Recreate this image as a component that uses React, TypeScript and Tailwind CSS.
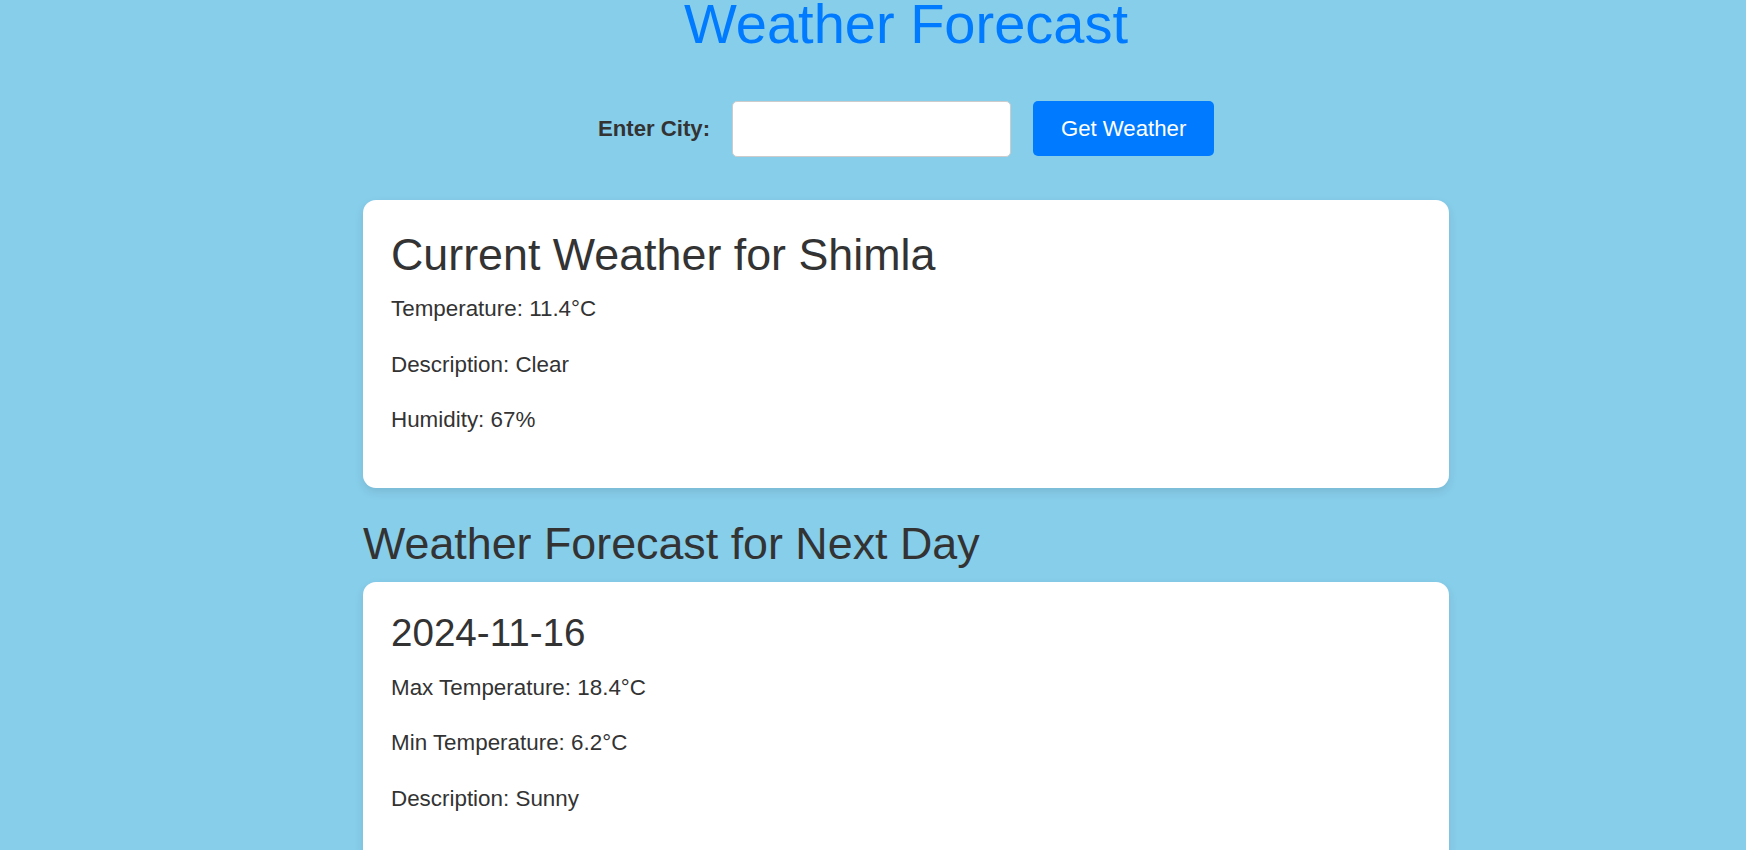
import { useState } from 'react';

const current = {
  city: 'Shimla',
  temp: 11.4,
  description: 'Clear',
  humidity: 67,
};

const forecast = {
  date: '2024-11-16',
  max: 18.4,
  min: 6.2,
  description: 'Sunny',
};

export default function App() {
  const [city, setCity] = useState('');

  return (
    <div className="min-h-screen bg-[#87ceeb] pl-[66px] text-[#333] font-['Liberation_Sans',Arial,sans-serif]">
      <div className="mx-auto w-[1086px] pb-10">
        {/* Title */}
        <h1 className="text-center text-[56px] leading-[48px] text-[#007bff]">Weather Forecast</h1>

        {/* Search row */}
        <div className="mt-[52.5px] flex items-center justify-center">
          <label className="text-[22.2px] leading-[25px] font-bold">Enter City:</label>
          <input
            type="text"
            value={city}
            onChange={(e) => setCity(e.target.value)}
            className="ml-[22px] h-[56px] w-[279px] rounded-[5px] border border-[#ccc] bg-white px-3 text-[22px] outline-none"
          />
          <button className="ml-[22px] h-[55px] w-[181px] rounded-[5px] bg-[#007bff] text-[22.2px] leading-[25px] text-white">
            Get Weather
          </button>
        </div>

        {/* Current weather card */}
        <div className="mt-[43.5px] rounded-[13px] bg-white px-[28px] pt-[28px] pb-[29px] shadow-[0_4px_10px_rgba(0,0,0,0.1)]">
          <h2 className="mb-[12.3px] text-[44.8px] leading-[52px]">Current Weather for {current.city}</h2>
          <p className="mb-[22px] text-[22.4px] leading-[33.5px]">Temperature: {current.temp}°C</p>
          <p className="mb-[22px] text-[22.4px] leading-[33.5px]">Description: {current.description}</p>
          <p className="mb-[22px] text-[22.4px] leading-[33.5px]">Humidity: {current.humidity}%</p>
        </div>

        {/* Forecast */}
        <h2 className="mt-[29.5px] mb-[12.8px] text-[44.8px] leading-[52px]">Weather Forecast for Next Day</h2>
        <div className="rounded-[13px] bg-white px-[28px] pt-[28px] pb-[29px] shadow-[0_4px_10px_rgba(0,0,0,0.1)]">
          <h3 className="mb-[14.5px] text-[38.6px] leading-[46px]">{forecast.date}</h3>
          <p className="mb-[22px] text-[22.4px] leading-[33.5px]">Max Temperature: {forecast.max}°C</p>
          <p className="mb-[22px] text-[22.4px] leading-[33.5px]">Min Temperature: {forecast.min}°C</p>
          <p className="mb-[22px] text-[22.4px] leading-[33.5px]">Description: {forecast.description}</p>
        </div>
      </div>
    </div>
  );
}
